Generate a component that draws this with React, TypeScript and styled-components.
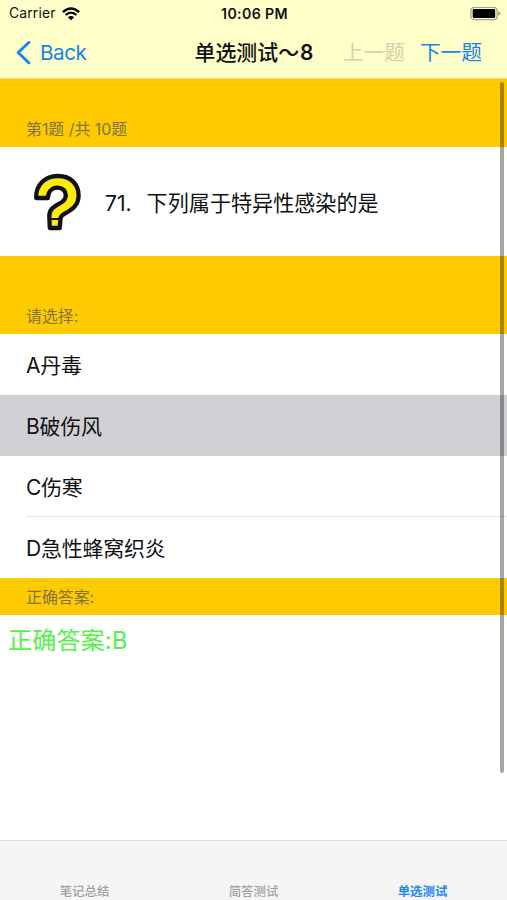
import React from "react";
import styled, { createGlobalStyle, css } from "styled-components";

const GlobalStyle = createGlobalStyle`
  * { box-sizing: border-box; }
  body { margin: 0; background: #fff; }
`;

const Screen = styled.div`
  position: relative;
  display: flex;
  flex-direction: column;
  width: 507px;
  height: 900px;
  overflow: hidden;
  background: #fff;
  color: #111;
  font-family: Inter, "Noto Sans CJK SC", sans-serif;
  white-space: pre;
`;

const TopBar = styled.header`
  flex: none;
  height: 79px;
  background: #ffffca;
  border-bottom: 1px solid #eedc86;
`;

const StatusBar = styled.div`
  display: grid;
  grid-template-columns: 1fr auto 1fr;
  align-items: center;
  height: 27px;
  padding: 0 6px 0 9px;
  font-size: 13.9px;
  line-height: 27px;
`;

const Carrier = styled.div`
  display: flex;
  align-items: center;
  gap: 6px;
  letter-spacing: 0.15px;
`;

const Clock = styled.div`
  padding-right: 1px;
  font-weight: 600;
  font-size: 14.2px;
  letter-spacing: 0.35px;
`;

const BatterySlot = styled.div`
  display: flex;
  justify-content: flex-end;
`;

const NavBar = styled.nav`
  display: grid;
  grid-template-columns: 1fr auto 1fr;
  align-items: center;
  height: 51px;
  padding: 0 25px 0 16px;
  font-size: 20.7px;
  line-height: 50px;
`;

const BackButton = styled.a`
  display: flex;
  align-items: center;
  gap: 9px;
  color: #1683ef;
  letter-spacing: -0.5px;
`;

const Title = styled.h1`
  margin: 0;
  padding: 1px 0 0 10px;
  font-size: 20.9px;
  font-weight: 500;
  line-height: 50px;
`;

const TitleNumber = styled.span`
  padding-left: 1px;
  font-weight: 600;
`;

const NavActions = styled.div`
  display: flex;
  justify-content: flex-end;
  gap: 15px;
  padding-top: 1px;
`;

const NavAction = styled.span<{ $disabled?: boolean }>`
  color: ${(p) => (p.$disabled ? "#d2d2ad" : "#1683ef")};
`;

const List = styled.main`
  flex: 1;
  display: flex;
  flex-direction: column;
`;

const SectionHeader = styled.div<{ $height: number }>`
  display: flex;
  align-items: flex-end;
  height: ${(p) => p.$height}px;
  padding: 0 26px 6px;
  background: #ffca00;
  color: #80743f;
  font-size: 15.9px;
  line-height: 22px;
`;

const QuestionRow = styled.div`
  display: flex;
  align-items: center;
  gap: 22px;
  height: 109px;
  padding-left: 33px;
  font-size: 21.1px;
`;

const QuestionText = styled.div`
  display: flex;
  align-items: baseline;
  gap: 15px;
`;

const Option = styled.div<{ $selected?: boolean; $divided?: boolean }>`
  display: flex;
  flex-direction: column;
  height: 61px;
  padding-left: 26px;
  font-size: 21px;
  line-height: 56px;
  letter-spacing: -0.25px;
  ${(p) => p.$selected && css`background: #d1d0d5;`}
  &::after {
    content: "";
    height: 1px;
    margin-top: auto;
    background: ${(p) => (p.$divided ? "#e4e4e6" : "transparent")};
  }
`;

const OptionText = styled.span`
  height: 60px;
  padding-top: 4px;
`;

const Answer = styled.p`
  margin: 0;
  padding: 8px;
  color: #59f04c;
  font-size: 24.2px;
  line-height: 36px;
`;

const ScrollThumb = styled.div`
  position: absolute;
  top: 82px;
  right: 3px;
  width: 4px;
  height: 691px;
  border-radius: 2px;
  background: rgba(0, 0, 0, 0.35);
`;

const TabBar = styled.footer`
  display: grid;
  grid-template-columns: repeat(3, 1fr);
  align-items: end;
  flex: none;
  height: 60px;
  border-top: 1px solid #dcdcdc;
  background: #f6f5f6;
`;

const Tab = styled.div<{ $active?: boolean }>`
  text-align: center;
  font-size: 12.4px;
  line-height: 16px;
  font-weight: ${(p) => (p.$active ? 700 : 500)};
  color: ${(p) => (p.$active ? "#2089f5" : "#a0a0a0")};
`;

const WifiIcon = () => (
  <svg width="18" height="14" viewBox="0 0 18 14" fill="none" stroke="#000">
    <path d="M0.9 5.1Q9-2.1 17.1 5.1" strokeWidth="2.5" />
    <path d="M3.6 8Q9 3.2 14.4 8" strokeWidth="2.3" />
    <path d="M9 13.2L5.9 10.2Q9 7.6 12.1 10.2Z" fill="#000" stroke="none" />
  </svg>
);

const BatteryIcon = () => (
  <svg width="31" height="14" viewBox="0 0 31 14">
    <rect x="0.9" y="0.4" width="26.2" height="12.2" rx="3.4" fill="none" stroke="#a4a482" strokeWidth="1.3" />
    <rect x="2.7" y="2.1" width="22.5" height="9" rx="1.4" fill="#000" />
    <path d="M28.2 4.3Q30.5 5.3 30.5 6.5T28.2 8.7Z" fill="#a4a482" />
  </svg>
);

const BackIcon = () => (
  <svg width="15" height="24" viewBox="0 0 15 24" fill="none">
    <path d="M13 1.3L2.2 11.6L13 21.9" stroke="#1683ef" strokeWidth="2.8" strokeLinecap="round" strokeLinejoin="round" />
  </svg>
);

const QuestionIcon = () => (
  <svg width="50" height="58" viewBox="0 0 50 58">
    <path
      d="M3.2 25C2.5 11.5 12.3 3 25 3C38 3 45.6 11.5 45.6 22.4C45.6 32 39.5 36.5 31.3 40.8C28.6 42.3 27.5 43.6 27.5 46L26.7 55H16.8L16.3 43.6C16 36.4 20.5 34 26.3 30.7C30.4 28.4 32.8 26.1 32.8 22.4C32.8 18 29.6 14.7 24.5 14.7C19 14.7 15.2 18.6 14.8 25Z"
      fill="#fcec0b"
      stroke="#111"
      strokeWidth="4.3"
      strokeLinejoin="round"
    />
    <path d="M16 46H28" stroke="#111" strokeWidth="2" />
  </svg>
);

const options = [
  { text: "A丹毒" },
  { text: "B破伤风", selected: true },
  { text: "C伤寒", divided: true },
  { text: "D急性蜂窝织炎" },
];

const tabs = ["笔记总结", "简答测试", "单选测试"];

export default function App() {
  return (
    <Screen>
      <GlobalStyle />
      <TopBar>
        <StatusBar>
          <Carrier>
            <span>Carrier</span>
            <WifiIcon />
          </Carrier>
          <Clock>10:06 PM</Clock>
          <BatterySlot>
            <BatteryIcon />
          </BatterySlot>
        </StatusBar>
        <NavBar>
          <BackButton>
            <BackIcon />
            <span>Back</span>
          </BackButton>
          <Title>
            单选测试～<TitleNumber>8</TitleNumber>
          </Title>
          <NavActions>
            <NavAction $disabled>上一题</NavAction>
            <NavAction>下一题</NavAction>
          </NavActions>
        </NavBar>
      </TopBar>
      <List>
        <SectionHeader $height={68}>第1题 /共 10题</SectionHeader>
        <QuestionRow>
          <QuestionIcon />
          <QuestionText>
            <span>71.</span>
            <span>下列属于特异性感染的是</span>
          </QuestionText>
        </QuestionRow>
        <SectionHeader $height={78}>请选择:</SectionHeader>
        {options.map((o) => (
          <Option key={o.text} $selected={o.selected} $divided={o.divided}>
            <OptionText>{o.text}</OptionText>
          </Option>
        ))}
        <SectionHeader $height={37}>正确答案:</SectionHeader>
        <Answer>正确答案:B</Answer>
      </List>
      <ScrollThumb />
      <TabBar>
        {tabs.map((t) => (
          <Tab key={t} $active={t === "单选测试"}>
            {t}
          </Tab>
        ))}
      </TabBar>
    </Screen>
  );
}
